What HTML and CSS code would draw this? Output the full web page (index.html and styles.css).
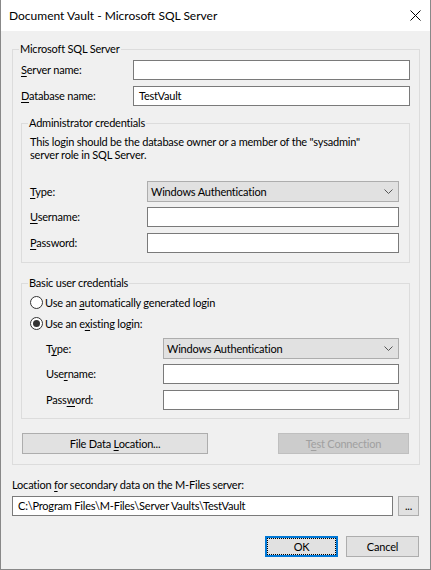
FILE: index.html
```html
<!DOCTYPE html>
<html>
<head>
<meta charset="utf-8">
<link rel="stylesheet" href="styles.css">
</head>
<body>
<div class="window">
  <div class="titlebar">
    <span class="title">Document Vault - Microsoft SQL Server</span>
    <svg class="close" width="11" height="11" viewBox="0 0 11 11"><path d="M0.5 0.5L10.5 10.5M10.5 0.5L0.5 10.5" stroke="#000" stroke-width="1" fill="none"/></svg>
  </div>
  <div class="content">
    <fieldset class="group outer">
      <legend>Microsoft SQL Server</legend>
      <div class="rows top-rows">
        <div class="row"><span class="lbl lbl-main"><u>S</u>erver name:</span><div class="field"></div></div>
        <div class="row"><span class="lbl lbl-main"><u>D</u>atabase name:</span><div class="field"><span class="val">TestVault</span></div></div>
      </div>

      <fieldset class="group inner admin">
        <legend>Administrator credentials</legend>
        <p class="desc">This login should be the database owner or a member of the "sysadmin"<br>server role in SQL Server.</p>
        <div class="rows">
          <div class="row"><span class="lbl lbl-sub"><u>T</u>ype:</span><div class="combo"><span class="val">Windows Authentication</span><svg class="chev" width="9" height="5" viewBox="0 0 9 5"><path d="M0.5 0.5L4.5 4.5L8.5 0.5" stroke="#555" fill="none"/></svg></div></div>
          <div class="row"><span class="lbl lbl-sub"><u>U</u>sername:</span><div class="field"></div></div>
          <div class="row gap6"><span class="lbl lbl-sub"><u>P</u>assword:</span><div class="field"></div></div>
        </div>
      </fieldset>

      <fieldset class="group inner basic">
        <legend>Basic user credentials</legend>
        <div class="radios">
          <div class="radio-row"><span class="radio"></span><span>Use an <u>a</u>utomatically generated login</span></div>
          <div class="radio-row"><span class="radio checked"></span><span>Use an e<u>x</u>isting login:</span></div>
        </div>
        <div class="rows sub-rows">
          <div class="row"><span class="lbl lbl-sub">T<u>y</u>pe:</span><div class="combo"><span class="val">Windows Authentication</span><svg class="chev" width="9" height="5" viewBox="0 0 9 5"><path d="M0.5 0.5L4.5 4.5L8.5 0.5" stroke="#555" fill="none"/></svg></div></div>
          <div class="row"><span class="lbl lbl-sub">Use<u>r</u>name:</span><div class="field"></div></div>
          <div class="row gap6"><span class="lbl lbl-sub">Pass<u>w</u>ord:</span><div class="field"></div></div>
        </div>
      </fieldset>

      <div class="btn-row">
        <div class="btn file-btn"><span>File Data <u>L</u>ocation...</span></div>
        <div class="btn test-btn disabled"><span>T<u>e</u>st Connection</span></div>
      </div>
    </fieldset>

    <div class="loc-label">Location <u>f</u>or secondary data on the M-Files server:</div>
    <div class="path-row">
      <div class="field path"><span class="val">C:\Program Files\M-Files\Server Vaults\TestVault</span></div>
      <div class="btn browse"><span>...</span></div>
    </div>

    <div class="actions">
      <div class="btn ok"><span class="focus">OK</span></div>
      <div class="btn cancel"><span>Cancel</span></div>
    </div>
  </div>
</div>
</body>
</html>
```
FILE: styles.css
```css
* { box-sizing: border-box; }
html, body { margin: 0; padding: 0; background: #f0f0f0; }
body {
  font-family: Lato, "Noto Sans", sans-serif;
  font-size: 11px;
  letter-spacing: -0.2px;
  color: #000;
}
u { text-decoration: underline; text-underline-offset: 2px; }

.window {
  width: 431px;
  height: 570px;
  border: 1px solid #888;
  border-top: none;
  background: #f0f0f0;
  display: flex;
  flex-direction: column;
}
.titlebar {
  height: 31px;
  background: #fff;
  display: flex;
  align-items: center;
  justify-content: space-between;
  padding: 0 9px 0 8px;
}
.title { font-size: 12px; letter-spacing: 0; line-height: 16px; color: #000; }
.close { display: block; }

.content {
  flex: 1;
  padding: 10px 10px 0 11px;
  display: flex;
  flex-direction: column;
}

.group {
  margin: 0;
  border: 1px solid #dcdcdc;
  min-width: 0;
}
.group legend {
  margin-left: -2px;
  padding: 0 1px;
  line-height: 16px;
}
.outer { padding: 3px 9px 10px 8px; }
.inner { padding: 4px 10px 9px 8px; }
.admin { margin-top: 9px; }
.basic { margin-top: 12px; padding-top: 3px; padding-bottom: 8px; }

.rows { display: flex; flex-direction: column; gap: 5px; }
.top-rows { gap: 6px; }
.row { display: flex; align-items: center; }
.row.gap6 { margin-top: 1px; }
.lbl { flex: none; line-height: 16px; }
.lbl-main { width: 112px; }
.lbl-sub { width: 117px; }

.field {
  flex: 1;
  height: 20px;
  border: 1px solid #7a7a7a;
  background: #fff;
  display: flex;
  align-items: center;
  padding-left: 4px;
}
.top-rows .field { padding-left: 5px; }
.combo {
  flex: 1;
  height: 21px;
  border: 1px solid #adadad;
  background: #e1e1e1;
  display: flex;
  align-items: center;
  justify-content: space-between;
  padding: 0 5px 0 3px;
}
.val { line-height: 16px; white-space: nowrap; }
.chev { display: block; }

.desc {
  margin: 0 0 20px 0;
  line-height: 13px;
  white-space: nowrap;
}

.radios { display: flex; flex-direction: column; gap: 4px; }
.radio-row { display: flex; align-items: center; height: 17px; }
.radio {
  width: 13px;
  height: 13px;
  border: 1px solid #333;
  border-radius: 50%;
  background: #fff;
  margin-right: 2px;
  flex: none;
  display: flex;
  align-items: center;
  justify-content: center;
}
.radio.checked::after {
  content: "";
  width: 7px;
  height: 7px;
  border-radius: 50%;
  background: #333;
}
.sub-rows { margin: 6px 0 0 16px; }

.btn {
  height: 21px;
  border: 1px solid #adadad;
  background: #e1e1e1;
  display: flex;
  align-items: center;
  justify-content: center;
  line-height: 16px;
  white-space: nowrap;
}
.btn.disabled { background: #cccccc; border-color: #bfbfbf; color: #a0a0a0; }
.btn-row {
  margin-top: 14px;
  display: flex;
  justify-content: space-between;
  padding: 0 1px;
}
.file-btn { width: 186px; }
.test-btn { width: 131px; }

.loc-label { margin-top: 12px; line-height: 16px; }
.path-row {
  margin-top: 3px;
  display: flex;
  gap: 5px;
  padding-right: 1px;
}
.path { flex: 1; padding-left: 5px; }
.browse { width: 21px; height: 20px; }

.actions {
  margin-top: 20px;
  display: flex;
  justify-content: flex-end;
  gap: 8px;
  padding-right: 1px;
}
.ok, .cancel { width: 73px; }
.ok {
  border: 2px solid #0078d7;
}
.ok .focus {
  flex: 1;
  align-self: stretch;
  display: flex;
  align-items: center;
  justify-content: center;
  outline: 1px dotted #000;
  outline-offset: -1px;
}
```
